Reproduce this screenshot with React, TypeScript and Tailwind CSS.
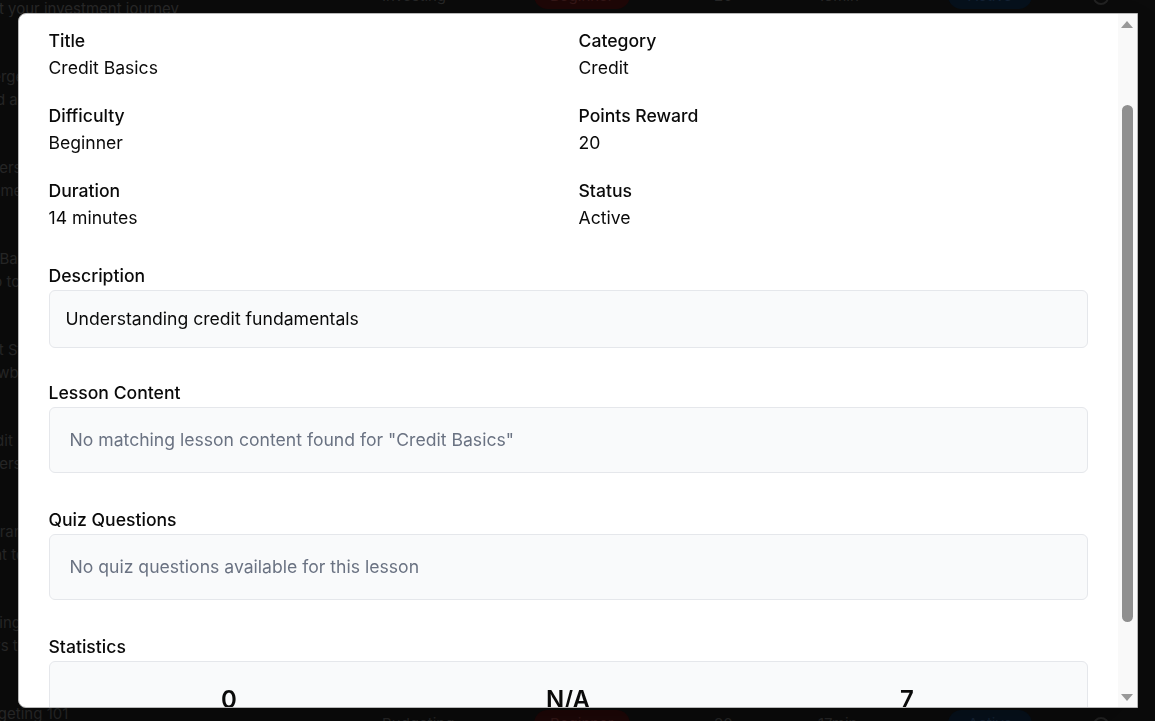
const bgRows = [
  { t: "Saving for retirement", d: "Start your investment journey", c: "Investing", diff: "Beginner", p: "20", m: "15min" },
  { t: "Emergency Funds", d: "Build a safety net for life", c: "Saving", diff: "Beginner", p: "25", m: "12min" },
  { t: "Understanding Income", d: "Income and paycheck basics", c: "Income", diff: "Beginner", p: "15", m: "10min" },
  { t: "Tax Basics", d: "Intro to filing your taxes", c: "Taxes", diff: "Intermediate", p: "30", m: "20min" },
  { t: "Debt Strategies", d: "Snowball vs avalanche", c: "Debt", diff: "Intermediate", p: "30", m: "18min" },
  { t: "Credit Basics", d: "Understanding credit fundamentals", c: "Credit", diff: "Beginner", p: "20", m: "14min" },
  { t: "Insurance Accounts", d: "What to protect and why", c: "Insurance", diff: "Beginner", p: "20", m: "16min" },
  { t: "Cutting Costs", d: "Ways to spend less", c: "Budgeting", diff: "Beginner", p: "25", m: "11min" },
  { t: "Budgeting 101", d: "Your first monthly budget", c: "Budgeting", diff: "Beginner", p: "30", m: "17min" },
];

const details = [
  { label: "Title", value: "Credit Basics" },
  { label: "Category", value: "Credit" },
  { label: "Difficulty", value: "Beginner" },
  { label: "Points Reward", value: "20" },
  { label: "Duration", value: "14 minutes" },
  { label: "Status", value: "Active" },
];

const stats = [
  { n: "0", l: "Completions" },
  { n: "N/A", l: "Average Score" },
  { n: "7", l: "Quiz Attempts" },
];

function BackgroundPage() {
  return (
    <div className="h-[721px] overflow-hidden bg-[#0b0b0b] text-[15px] text-[#272727]">
      <div className="mt-[-49px] ml-[-30px] flex flex-col">
        {bgRows.map((r) => (
          <div key={r.t} className="flex h-[91px] items-center">
            <div className="w-[412px] leading-[23px]">
              <div>{r.t}</div>
              <div>{r.d}</div>
            </div>
            <div className="w-[152px]">{r.c}</div>
            <div className="w-[180px]">
              <span className="rounded-full bg-[#1e0707] px-4 py-1 text-[#351717]">{r.diff}</span>
            </div>
            <div className="w-[104px]">{r.p}</div>
            <div className="w-[130px]">{r.m}</div>
            <div className="w-[145px]">
              <span className="rounded-full bg-[#06111c] px-5 py-1 text-[#142234]">Active</span>
            </div>
            <div className="h-4 w-4 rounded-full border-2 border-[#222]" />
          </div>
        ))}
      </div>
    </div>
  );
}

function Section({ title, className, children }: { title: string; className: string; children: React.ReactNode }) {
  return (
    <div className={className}>
      <h3 className="mb-[1px] text-[17.6px] leading-[26px] font-medium text-[#0a0a0a]">{title}</h3>
      {children}
    </div>
  );
}

function Scrollbar() {
  return (
    <div className="flex w-[19px] flex-col items-center bg-[#f9f9f9]">
      <div className="flex h-[20px] items-center justify-center">
        <div className="h-0 w-0 border-x-[6px] border-b-[7px] border-x-transparent border-b-[#999]" />
      </div>
      <div className="h-[71px]" />
      <div className="h-[517px] w-[11px] rounded-full bg-[#8f8f8f]" />
      <div className="flex-1" />
      <div className="flex h-[20px] items-center justify-center">
        <div className="h-0 w-0 border-x-[6px] border-t-[7px] border-x-transparent border-t-[#999]" />
      </div>
    </div>
  );
}

export default function App() {
  return (
    <div className="relative font-['Inter',sans-serif]">
      <BackgroundPage />

      <div className="fixed inset-0 flex items-center justify-center">
        <div className="flex h-[695px] w-[1120px] overflow-hidden rounded-l-lg border border-[#b8b8b8] bg-white shadow-2xl">
          <div className="flex-1 overflow-hidden px-[30px] pt-[14px]">
            <div className="grid grid-cols-2 gap-x-[21px] gap-y-[22px]">
              {details.map((d) => (
                <div key={d.label}>
                  <div className="text-[17.6px] leading-[26px] font-medium text-[#0a0a0a]">{d.label}</div>
                  <div className="mt-[1px] text-[17.6px] leading-[26px] text-[#0a0a0a]">{d.value}</div>
                </div>
              ))}
            </div>

            <Section title="Description" className="mt-[32px]">
              <div className="rounded-md border border-gray-200 bg-gray-50 px-4 py-[15px] text-[17.6px] leading-[26px] text-[#0a0a0a]">
                Understanding credit fundamentals
              </div>
            </Section>

            <Section title="Lesson Content" className="mt-8">
              <div className="rounded-md border border-gray-200 bg-gray-50 px-5 py-[19px] text-[17.6px] leading-[26px] text-gray-500">
                No matching lesson content found for "Credit Basics"
              </div>
            </Section>

            <Section title="Quiz Questions" className="mt-[34px]">
              <div className="rounded-md border border-gray-200 bg-gray-50 px-5 py-[19px] text-[17.6px] leading-[26px] text-gray-500">
                No quiz questions available for this lesson
              </div>
            </Section>

            <Section title="Statistics" className="mt-[34px]">
              <div className="grid grid-cols-3 gap-5 rounded-md border border-gray-200 bg-gray-50 px-5 pt-[22px] pb-5">
                {stats.map((s) => (
                  <div key={s.l} className="text-center">
                    <div className="text-2xl leading-8 font-semibold text-[#0a0a0a]">{s.n}</div>
                    <div className="mt-1 text-sm leading-5 text-gray-500">{s.l}</div>
                  </div>
                ))}
              </div>
            </Section>
          </div>
          <Scrollbar />
        </div>
      </div>
    </div>
  );
}
